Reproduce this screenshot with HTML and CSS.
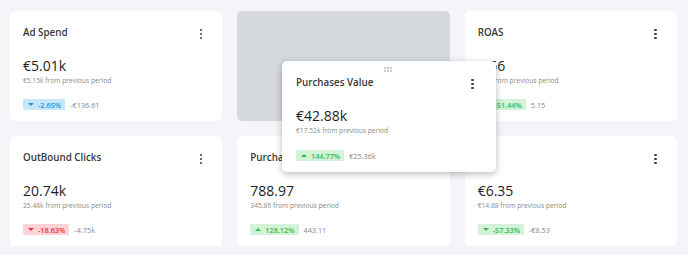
FILE: index.html
```html
<!DOCTYPE html>
<html>
<head>
    <meta charset="utf-8"/>
    <link rel="stylesheet" href="styles.css">
</head>
<body>
<div class="board">
    <div class="card">
        <div class="head"><span class="title">Ad Spend</span><span class="kebab"><i></i><i></i><i></i></span></div>
        <div class="value">€5.01k</div>
        <div class="prev">€5.15k from previous period</div>
        <div class="change"><span class="badge blue"><span class="arrow down"></span>-2.65%</span><span class="diff">-€136.61</span></div>
    </div>
    <div class="slot"></div>
    <div class="card">
        <div class="head"><span class="title">ROAS</span><span class="kebab"><i></i><i></i><i></i></span></div>
        <div class="value">8.56</div>
        <div class="prev">3.40 from previous period</div>
        <div class="change"><span class="badge green"><span class="arrow up"></span>151.44%</span><span class="diff">5.15</span></div>
    </div>
    <div class="card">
        <div class="head"><span class="title">OutBound Clicks</span><span class="kebab"><i></i><i></i><i></i></span></div>
        <div class="value">20.74k</div>
        <div class="prev">25.48k from previous period</div>
        <div class="change"><span class="badge red"><span class="arrow down"></span>-18.63%</span><span class="diff">-4.75k</span></div>
    </div>
    <div class="card">
        <div class="head"><span class="title">Purchases</span><span class="kebab"><i></i><i></i><i></i></span></div>
        <div class="value">788.97</div>
        <div class="prev">345.86 from previous period</div>
        <div class="change"><span class="badge green"><span class="arrow up"></span>128.12%</span><span class="diff">443.11</span></div>
    </div>
    <div class="card">
        <div class="head"><span class="title">CPP</span><span class="kebab"><i></i><i></i><i></i></span></div>
        <div class="value">€6.35</div>
        <div class="prev">€14.88 from previous period</div>
        <div class="change"><span class="badge green"><span class="arrow down"></span>-57.33%</span><span class="diff">-€8.53</span></div>
    </div>

    <div class="card dragging">
        <span class="grip"><i></i><i></i><i></i><i></i><i></i><i></i></span>
        <div class="head"><span class="title">Purchases Value</span><span class="kebab"><i></i><i></i><i></i></span></div>
        <div class="value">€42.88k</div>
        <div class="prev">€17.52k from previous period</div>
        <div class="change"><span class="badge green"><span class="arrow up"></span>144.77%</span><span class="diff">€25.36k</span></div>
    </div>
</div>
</body>
</html>
```

FILE: styles.css
```css
html, body {
    margin: 0;
    background: #f4f5f9;
}

.board {
    position: relative;
    display: grid;
    grid-template-columns: repeat(3, 1fr);
    gap: 15px;
    padding: 11px 11px 9px 10px;
    font-family: 'Open Sans', 'Noto Sans', sans-serif;
}

.card {
    background: #fff;
    border-radius: 5px;
    height: 110px;
    box-sizing: border-box;
    padding: 14px 13px 11px 13px;
    display: flex;
    flex-direction: column;
}

.slot {
    background: #d5d8dd;
    border-radius: 5px;
    height: 110px;
}

.card .head {
    display: flex;
    justify-content: space-between;
    align-items: center;
    height: 14px;
}

.card .title {
    font-size: 9.8px;
    font-weight: 600;
    color: #383838;
}

.card .kebab {
    display: flex;
    flex-direction: column;
    gap: 1.5px;
    margin-right: 7px;
    margin-top: 4px;
}

.card .kebab i {
    width: 2.6px;
    height: 2.6px;
    border-radius: 50%;
    background: #3c3c3c;
}

.card .value {
    margin-top: 18px;
    font-size: 14px;
    line-height: 18px;
    color: #1e1e1e;
}

.card .prev {
    font-size: 6.7px;
    line-height: 12px;
    color: #8b8b8b;
}

.card .change {
    margin-top: auto;
    display: flex;
    align-items: center;
    gap: 5px;
    font-size: 7.3px;
}

.card .badge {
    display: flex;
    align-items: center;
    gap: 4px;
    height: 11px;
    padding: 0 4px 0 5px;
    border-radius: 1px;
    font-weight: 600;
}

.card .diff {
    color: #888;
}

.badge.blue { background: #c5e6fb; color: #2e8fe0; }
.badge.red { background: #ffd3d6; color: #f3303d; }
.badge.green { background: #d4f2d7; color: #34b954; }

.arrow {
    width: 0;
    height: 0;
    border-left: 3px solid transparent;
    border-right: 3px solid transparent;
}
.arrow.down { border-top: 3px solid currentColor; }
.arrow.up { border-bottom: 3px solid currentColor; }

.card.dragging {
    position: absolute;
    left: 282px;
    top: 61px;
    width: 214px;
    height: 111px;
    padding-left: 14px;
    padding-right: 15px;
    box-shadow: 0 2px 7px rgba(0, 0, 0, 0.28);
}

.grip {
    position: absolute;
    left: 102px;
    top: 6px;
    display: grid;
    grid-template-columns: repeat(3, 2px);
    gap: 1px;
}

.grip i {
    width: 2px;
    height: 2px;
    background: #c9cbd0;
}
```
